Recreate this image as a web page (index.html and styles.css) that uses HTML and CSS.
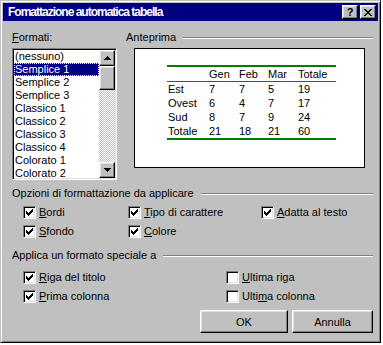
FILE: index.html
```html
<!DOCTYPE html>
<html lang="it">
<head>
    <meta charset="UTF-8">
    <title>Fomattazione automatica tabella</title>
    <link rel="stylesheet" href="styles.css">
</head>
<body>
    <div class="window">
        <div class="titlebar">
            <span class="title">Fomattazione automatica tabella</span>
            <div class="title-buttons">
                <span class="tbtn help">?</span>
                <span class="tbtn close">
                    <svg width="8" height="7" viewBox="0 0 8 7" shape-rendering="crispEdges">
                        <path d="M0 0h2v1h-2zM6 0h2v1h-2zM1 1h2v1h-2zM5 1h2v1h-2zM2 2h4v1h-4zM3 3h2v1h-2zM2 4h4v1h-4zM1 5h2v1h-2zM5 5h2v1h-2zM0 6h2v1h-2zM6 6h2v1h-2z"/>
                    </svg>
                </span>
            </div>
        </div>

        <div class="body">
            <div class="top">
                <div class="formats">
                    <div class="label"><u>F</u>ormati:</div>
                    <div class="listbox">
                        <ul class="items">
                            <li>(nessuno)</li>
                            <li class="selected">Semplice 1</li>
                            <li>Semplice 2</li>
                            <li>Semplice 3</li>
                            <li>Classico 1</li>
                            <li>Classico 2</li>
                            <li>Classico 3</li>
                            <li>Classico 4</li>
                            <li>Colorato 1</li>
                            <li>Colorato 2</li>
                        </ul>
                        <div class="scrollbar">
                            <div class="sb-btn">
                                <svg width="7" height="4" viewBox="0 0 7 4" shape-rendering="crispEdges">
                                    <path d="M3 0h1v1h-1zM2 1h3v1h-3zM1 2h5v1h-5zM0 3h7v1h-7z"/>
                                </svg>
                            </div>
                            <div class="sb-thumb"></div>
                            <div class="sb-track"></div>
                            <div class="sb-btn">
                                <svg width="7" height="4" viewBox="0 0 7 4" shape-rendering="crispEdges">
                                    <path d="M0 0h7v1h-7zM1 1h5v1h-5zM2 2h3v1h-3zM3 3h1v1h-1z"/>
                                </svg>
                            </div>
                        </div>
                    </div>
                </div>

                <div class="preview-group">
                    <div class="group-head"><span>Anteprima</span><span class="etch"></span></div>
                    <div class="preview">
                        <div class="sample">
                            <div class="row head"><span></span><span>Gen</span><span>Feb</span><span>Mar</span><span>Totale</span></div>
                            <div class="row"><span>Est</span><span>7</span><span>7</span><span>5</span><span>19</span></div>
                            <div class="row"><span>Ovest</span><span>6</span><span>4</span><span>7</span><span>17</span></div>
                            <div class="row"><span>Sud</span><span>8</span><span>7</span><span>9</span><span>24</span></div>
                            <div class="row"><span>Totale</span><span>21</span><span>18</span><span>21</span><span>60</span></div>
                        </div>
                    </div>
                </div>
            </div>

            <div class="group-head options-head"><span>Opzioni di formattazione da applicare</span><span class="etch"></span></div>
            <div class="checks options">
                <div class="check"><span class="box"><svg class="tick" width="7" height="7" viewBox="0 0 7 7" shape-rendering="crispEdges"><path d="M6 0h1v3h-1zM5 1h1v3h-1zM4 2h1v3h-1zM0 2h1v3h-1zM1 3h1v3h-1zM2 4h1v3h-1zM3 3h1v3h-1z"/></svg></span><span><u>B</u>ordi</span></div>
                <div class="check"><span class="box"><svg class="tick" width="7" height="7" viewBox="0 0 7 7" shape-rendering="crispEdges"><path d="M6 0h1v3h-1zM5 1h1v3h-1zM4 2h1v3h-1zM0 2h1v3h-1zM1 3h1v3h-1zM2 4h1v3h-1zM3 3h1v3h-1z"/></svg></span><span><u>T</u>ipo di carattere</span></div>
                <div class="check"><span class="box"><svg class="tick" width="7" height="7" viewBox="0 0 7 7" shape-rendering="crispEdges"><path d="M6 0h1v3h-1zM5 1h1v3h-1zM4 2h1v3h-1zM0 2h1v3h-1zM1 3h1v3h-1zM2 4h1v3h-1zM3 3h1v3h-1z"/></svg></span><span><u>A</u>datta al testo</span></div>
                <div class="check"><span class="box"><svg class="tick" width="7" height="7" viewBox="0 0 7 7" shape-rendering="crispEdges"><path d="M6 0h1v3h-1zM5 1h1v3h-1zM4 2h1v3h-1zM0 2h1v3h-1zM1 3h1v3h-1zM2 4h1v3h-1zM3 3h1v3h-1z"/></svg></span><span><u>S</u>fondo</span></div>
                <div class="check"><span class="box"><svg class="tick" width="7" height="7" viewBox="0 0 7 7" shape-rendering="crispEdges"><path d="M6 0h1v3h-1zM5 1h1v3h-1zM4 2h1v3h-1zM0 2h1v3h-1zM1 3h1v3h-1zM2 4h1v3h-1zM3 3h1v3h-1z"/></svg></span><span><u>C</u>olore</span></div>
            </div>

            <div class="group-head special-head"><span>Applica un formato speciale a</span><span class="etch"></span></div>
            <div class="checks special">
                <div class="check"><span class="box"><svg class="tick" width="7" height="7" viewBox="0 0 7 7" shape-rendering="crispEdges"><path d="M6 0h1v3h-1zM5 1h1v3h-1zM4 2h1v3h-1zM0 2h1v3h-1zM1 3h1v3h-1zM2 4h1v3h-1zM3 3h1v3h-1z"/></svg></span><span><u>R</u>iga del titolo</span></div>
                <div class="check"><span class="box"></span><span><u>U</u>ltima riga</span></div>
                <div class="check"><span class="box"><svg class="tick" width="7" height="7" viewBox="0 0 7 7" shape-rendering="crispEdges"><path d="M6 0h1v3h-1zM5 1h1v3h-1zM4 2h1v3h-1zM0 2h1v3h-1zM1 3h1v3h-1zM2 4h1v3h-1zM3 3h1v3h-1z"/></svg></span><span><u>P</u>rima colonna</span></div>
                <div class="check"><span class="box"></span><span>Ulti<u>m</u>a colonna</span></div>
            </div>

            <div class="buttons">
                <button class="btn ok">OK</button>
                <button class="btn cancel">Annulla</button>
            </div>
        </div>
    </div>
</body>
</html>
```

FILE: styles.css
```css
* {
    box-sizing: border-box;
}
body {
    margin: 0;
    background: #fff;
    font-family: "Liberation Sans", Arial, sans-serif;
    font-size: 11px;
    color: #000;
}
.window {
    width: 381px;
    height: 343px;
    background: #c0c0c0;
    border: 1px solid;
    border-color: #c0c0c0 #000 #000 #c0c0c0;
    box-shadow: inset 1px 1px #fff, inset -1px -1px #808080;
    padding: 2px;
}
.titlebar {
    height: 18px;
    background: #000080;
    color: #fff;
    display: flex;
    align-items: center;
    justify-content: space-between;
    padding: 0 2px 0 5px;
}
.title {
    font-weight: bold;
    font-size: 12px;
    letter-spacing: -1px;
}
.title-buttons {
    display: flex;
    gap: 2px;
}
.tbtn, .sb-btn, .sb-thumb, .btn {
    background: #c0c0c0;
    border: 1px solid;
    border-color: #fff #000 #000 #fff;
    box-shadow: inset -1px -1px #808080, inset 1px 1px #dfdfdf;
}
.tbtn {
    width: 16px;
    height: 14px;
    display: flex;
    align-items: center;
    justify-content: center;
    color: #000;
    font-weight: bold;
    font-size: 11px;
}
.body {
    padding: 10px 5px 0 9px;
}
.top {
    display: grid;
    grid-template-columns: 105px 1fr;
    column-gap: 9px;
}
.label, .group-head {
    height: 13px;
    line-height: 13px;
}
.group-head {
    display: flex;
    align-items: center;
    gap: 7px;
}
.etch {
    flex: 1;
    height: 2px;
    border-top: 1px solid #808080;
    border-bottom: 1px solid #fff;
}
.listbox {
    margin-top: 4px;
    height: 132px;
    display: flex;
    background: #fff;
    border: 1px solid;
    border-color: #808080 #fff #fff #808080;
    box-shadow: inset 1px 1px #000, inset -1px -1px #dfdfdf;
    padding: 1px;
}
.items {
    flex: 1;
    list-style: none;
    margin: 0;
    padding: 0;
    overflow: hidden;
}
.items li {
    height: 13px;
    line-height: 13px;
    padding-left: 1px;
    white-space: nowrap;
}
.items li.selected {
    background: #000080;
    color: #fff;
    outline: 1px dotted #ffff60;
    outline-offset: -1px;
}
.scrollbar {
    width: 16px;
    display: flex;
    flex-direction: column;
}
.sb-btn {
    height: 16px;
    display: flex;
    align-items: center;
    justify-content: center;
}
.sb-thumb {
    height: 24px;
}
.sb-track {
    flex: 1;
    background: repeating-conic-gradient(#fff 0 25%, #c0c0c0 0 50%) 0 0 / 2px 2px;
}
.preview {
    margin: 4px 0 0 8px;
    width: 231px;
    height: 120px;
    border: 1px solid #000;
    background: #fff;
    padding: 16px 0 0 32px;
}
.sample {
    width: 169px;
    border-top: 2px solid #008000;
    border-bottom: 2px solid #008000;
}
.sample .row {
    display: grid;
    grid-template-columns: 41px 30px 29px 30px 39px;
    height: 14px;
    line-height: 14px;
}
.sample .row.head {
    height: 15px;
    border-bottom: 1px solid #008000;
}
.sample .row span {
    padding-left: 1px;
}
.options-head {
    margin-top: 7px;
}
.special-head {
    margin-top: 11px;
}
.checks {
    display: grid;
    row-gap: 6px;
    padding-left: 11px;
    margin-top: 6px;
}
.checks.options {
    grid-template-columns: 105px 133px auto;
}
.checks.special {
    grid-template-columns: 203px auto;
    margin-top: 9px;
}
.check {
    display: flex;
    align-items: center;
    gap: 3px;
    height: 13px;
    line-height: 13px;
    white-space: nowrap;
}
.box {
    width: 13px;
    height: 13px;
    flex: none;
    background: #fff;
    border: 1px solid;
    border-color: #808080 #fff #fff #808080;
    box-shadow: inset 1px 1px #000, inset -1px -1px #dfdfdf;
    padding: 2px 0 0 2px;
}
.tick {
    display: block;
}
.buttons {
    display: flex;
    justify-content: flex-end;
    gap: 4px;
    margin-top: 7px;
}
.btn {
    height: 23px;
    font-family: inherit;
    font-size: 11px;
    color: #000;
    padding: 0;
}
.btn.ok {
    width: 88px;
}
.btn.cancel {
    width: 81px;
}
```
